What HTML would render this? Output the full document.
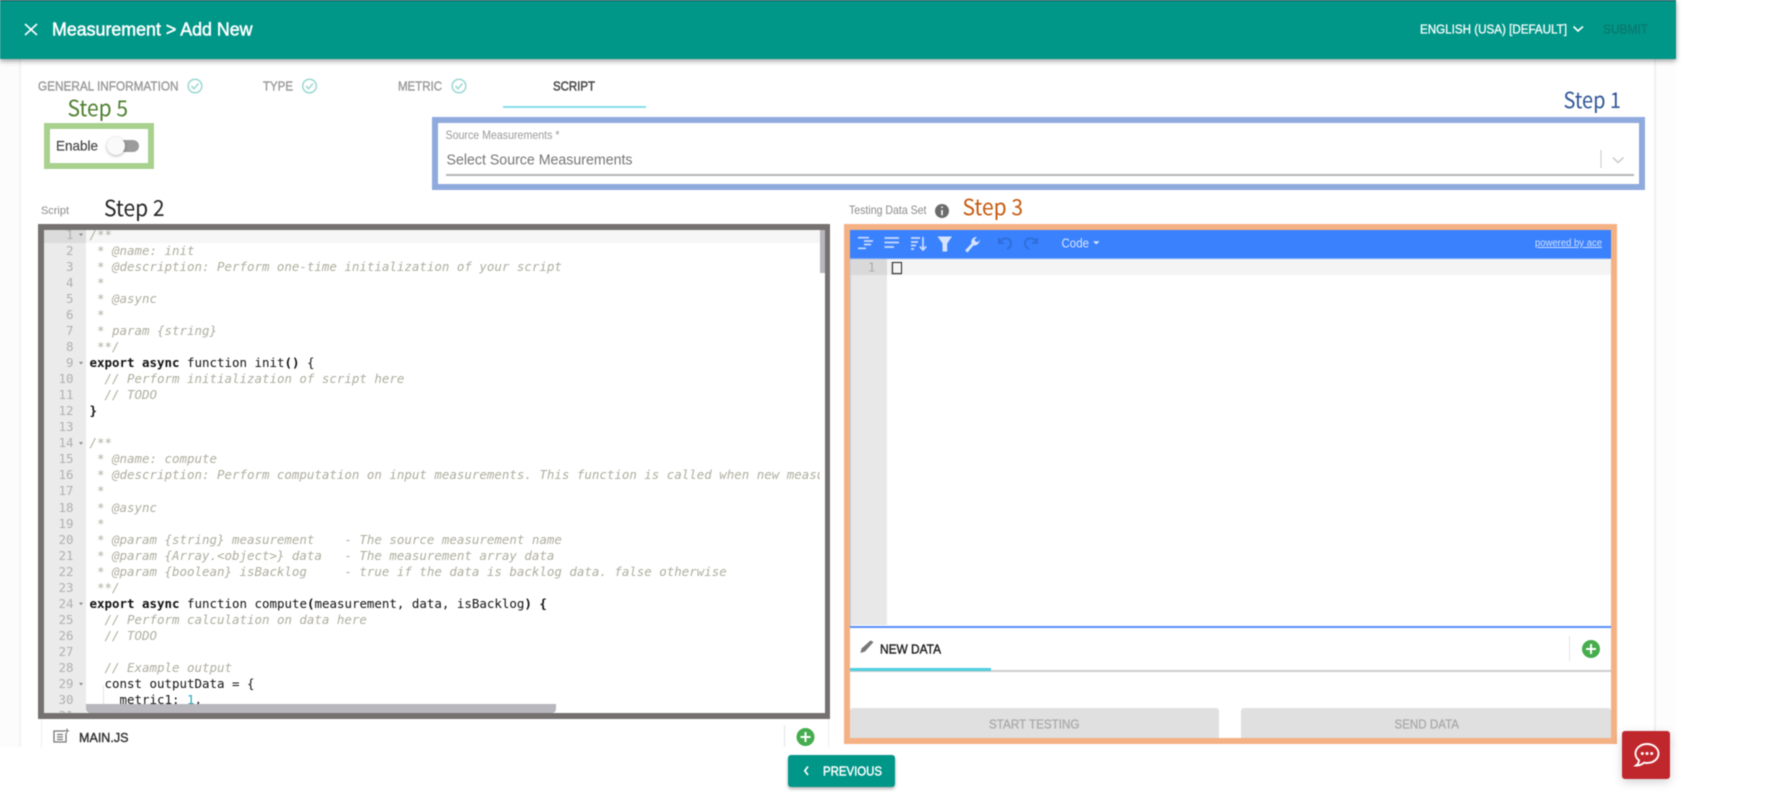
<!DOCTYPE html>
<html lang="en"><head><meta charset="utf-8"><title>Measurement &gt; Add New</title>
<style>
html,body{margin:0;padding:0;background:#fff;width:1777px;height:793px;overflow:hidden}
body{position:relative;font-family:"Liberation Sans",sans-serif}
.a{position:absolute;box-sizing:border-box}
pre{margin:0;font-family:"DejaVu Sans Mono","Liberation Mono",monospace;font-size:12.46px;line-height:16.05px;position:absolute}
.c{color:#aeae9f;font-style:italic}
b{font-weight:700}
svg{position:absolute;left:0;top:0}
svg text{font-family:"Liberation Sans",sans-serif}
.s{font-family:"Noto Sans CJK JP","Liberation Sans",sans-serif!important;font-size:22px}
#soft{position:absolute;left:0;top:0;width:1777px;height:793px;filter:blur(.45px)}
</style></head><body>
<div id="soft">
<div class="a" style="left:0;top:0;width:19px;height:747px;background:#fcfcfc"></div>
<div class="a" style="left:1656px;top:58px;width:20px;height:689px;background:#fdfdfd"></div>
<div class="a" style="left:19px;top:58px;width:1637px;height:689px;background:#fff;border-left:2px solid #f3f3f3;border-right:2px solid #f1f1f1"></div>
<div class="a" style="left:0;top:0;width:1676px;height:59px;background:#009688;border-top:1px solid #1d4a50;box-shadow:0 2px 5px rgba(0,0,0,.38)"></div>
<div class="a" style="left:503px;top:106px;width:143px;height:2px;background:#84dfe9"></div>

<div class="a" style="left:44px;top:123px;width:110px;height:46px;border:6px solid #a9d18e"></div>
<div class="a" style="left:432px;top:117px;width:1213px;height:73px;border:6px solid #8faadc"></div>
<div class="a" style="left:445.5px;top:174px;width:1188px;height:2px;background:#b5b5b5"></div>
<div class="a" style="left:115px;top:140px;width:24px;height:12px;border-radius:6px;background:#9c9c9c"></div>
<div class="a" style="left:106.5px;top:137px;width:18px;height:18px;border-radius:50%;background:#fafafa;box-shadow:0 1px 3px rgba(0,0,0,.3)"></div>

<div class="a" style="left:38px;top:224px;width:792px;height:495px;background:#fff;overflow:hidden;border:6px solid #767171;border-right-width:5px">
  <div class="a" style="left:0;top:0;width:41.5px;height:483px;background:#ebebeb"></div>
  <div class="a" style="left:0;top:0;width:41.5px;height:13px;background:#dcdcdc"></div>
  <div class="a" style="left:41.5px;top:0;width:742px;height:13px;background:#f6f6f6"></div>
  <pre style="left:0;top:-3.3px;width:29.5px;text-align:right;color:#b0b0b0">1
2
3
4
5
6
7
8
9
10
11
12
13
14
15
16
17
18
19
20
21
22
23
24
25
26
27
28
29
30
31</pre>
  <div class="a" style="left:45px;top:0;width:731px;height:483px;overflow:hidden">
  <pre style="left:0.5px;top:-3.3px;color:#111"><span class="c">/**
 * @name: init
 * @description: Perform one-time initialization of your script
 *
 * @async
 *
 * param {string}
 **/</span>
<b>export async</b> function init<b>()</b> {
  <span class="c">// Perform initialization of script here</span>
  <span class="c">// TODO</span>
<b>}</b>

<span class="c">/**
 * @name: compute
 * @description: Perform computation on input measurements. This function is called when new measurement data arrives
 *
 * @async
 *
 * @param {string} measurement    - The source measurement name
 * @param {Array.&lt;object&gt;} data   - The measurement array data
 * @param {boolean} isBacklog     - true if the data is backlog data. false otherwise
 **/</span>
<b>export async</b> function compute<b>(</b>measurement, data, isBacklog<b>) {</b>
  <span class="c">// Perform calculation on data here</span>
  <span class="c">// TODO</span>

  <span class="c">// Example output</span>
  const outputData = {
    metric1: <span style="color:#2aa7b5">1</span>,
</pre></div>
  <div class="a" style="left:59px;top:455px;width:1px;height:28px;background:#e4e4e4"></div>
  <div class="a" style="left:776px;top:0;width:6px;height:43px;background:#b6b6bc"></div>
  <div class="a" style="left:41.5px;top:474px;width:470.5px;height:9px;background:#b7b7bd;border-radius:0 0 4px 4px"></div>
</div>

<div class="a" style="left:41px;top:719px;width:1px;height:28px;background:#eee"></div>
<div class="a" style="left:828px;top:719px;width:1px;height:28px;background:#eee"></div>
<div class="a" style="left:784px;top:725px;width:1px;height:22px;background:#e2e2e2"></div>

<div class="a" style="left:844px;top:224px;width:773px;height:520px;border:6px solid #f4b183;background:#fff;overflow:hidden">
  <div class="a" style="left:0;top:0;width:761px;height:29px;background:#3a81fd;border-bottom:1px solid #6aa0fb"></div>
  <div class="a" style="left:0;top:29px;width:36.5px;height:366px;background:#e8e8e8"></div>
  <div class="a" style="left:0;top:29px;width:36.5px;height:16px;background:#d9d9d9"></div>
  <div class="a" style="left:36.5px;top:29px;width:725px;height:16px;background:#f4f4f4"></div>
  <div class="a" style="left:0;top:29px;width:1px;height:367px;background:#bcd3fb"></div>
  <div class="a" style="left:0;top:396px;width:761px;height:2px;background:#5a8ff8"></div>
  <div class="a" style="left:0;top:440px;width:761px;height:2px;background:#cdcdcd"></div>
  <div class="a" style="left:0;top:438px;width:141px;height:3px;background:#4fcfe0"></div>
  <div class="a" style="left:719px;top:406px;width:1px;height:25px;background:#e4e4e4"></div>
  <div class="a" style="left:0;top:478px;width:369px;height:40px;background:#e0e0e0;border-radius:3px 3px 0 0"></div>
  <div class="a" style="left:391px;top:478px;width:370px;height:40px;background:#e0e0e0;border-radius:3px 3px 0 0"></div>
  <div class="a" style="left:41px;top:31.5px;width:11px;height:13.5px;border:1px solid #cfcfcf;border-right:0"></div>
  <div class="a" style="left:42.3px;top:31.5px;width:10px;height:12px;border:1.7px solid #222"></div>
</div>

<div class="a" style="left:787.5px;top:755px;width:107.5px;height:32px;background:#009688;border-radius:3px;box-shadow:0 2px 3px rgba(0,0,0,.3)"></div>
<div class="a" style="left:1622px;top:731px;width:48px;height:48px;background:#c0272d;border-radius:3px;box-shadow:0 3px 10px rgba(0,0,0,.18)"></div>

<svg width="1777" height="793" viewBox="0 0 1777 793" xmlns="http://www.w3.org/2000/svg">
<!-- header -->
<path d="M25 24 L37 35 M37 24 L25 35" stroke="#fff" stroke-width="1.6" fill="none"/>
<text x="52" y="35.5" font-size="18" fill="#fff" stroke="#fff" stroke-width=".5" textLength="200.5" lengthAdjust="spacingAndGlyphs">Measurement &gt; Add New</text>
<text x="1420" y="33.5" font-size="13" fill="#f2fbfa" stroke="#f2fbfa" stroke-width=".35" textLength="147" lengthAdjust="spacingAndGlyphs">ENGLISH (USA) [DEFAULT]</text>
<path d="M1573.5 26.5 L1578 31 L1583 26.5" stroke="#fff" stroke-width="1.7" fill="none"/>
<text x="1603" y="33.5" font-size="13" fill="#0a7a6e" stroke="#0a7a6e" stroke-width=".3" textLength="45" lengthAdjust="spacingAndGlyphs">SUBMIT</text>
<!-- tabs -->
<g fill="#9b9b9b" font-size="13" stroke="#9b9b9b" stroke-width=".4">
<text x="38" y="90.5" textLength="140.5" lengthAdjust="spacingAndGlyphs">GENERAL INFORMATION</text>
<text x="263" y="90.5" textLength="30" lengthAdjust="spacingAndGlyphs">TYPE</text>
<text x="398" y="90.5" textLength="44" lengthAdjust="spacingAndGlyphs">METRIC</text>
</g>
<text x="553" y="90.5" font-size="13" fill="#444" stroke="#444" stroke-width=".45" textLength="42" lengthAdjust="spacingAndGlyphs">SCRIPT</text>
<g fill="none" stroke="#9bd8d1" stroke-width="1.5">
<circle cx="195" cy="86" r="6.8"/><path d="M191.5 86 L194 88.7 L198.5 83.5"/>
<circle cx="309.5" cy="86" r="6.8"/><path d="M306 86 L308.5 88.7 L313 83.5"/>
<circle cx="459" cy="86" r="6.8"/><path d="M455.5 86 L458 88.7 L462.5 83.5"/>
</g>
<!-- steps -->
<text class="s" x="67.5" y="116" fill="#4e7f2e" textLength="60.5" lengthAdjust="spacingAndGlyphs">Step 5</text>
<text class="s" x="1563.5" y="108" fill="#2f5597" textLength="57.5" lengthAdjust="spacingAndGlyphs">Step 1</text>
<text class="s" x="104" y="216" fill="#262626" textLength="60.5" lengthAdjust="spacingAndGlyphs">Step 2</text>
<text class="s" x="962.5" y="215" fill="#c55a11" textLength="60.5" lengthAdjust="spacingAndGlyphs">Step 3</text>
<!-- labels -->
<text x="56" y="150.5" font-size="14" fill="#444" stroke="#444" stroke-width=".15" textLength="42" lengthAdjust="spacingAndGlyphs">Enable</text>
<text x="445.5" y="139" font-size="11.5" fill="#999" textLength="114" lengthAdjust="spacingAndGlyphs">Source Measurements *</text>
<text x="446.5" y="164.5" font-size="15" fill="#767676" textLength="186" lengthAdjust="spacingAndGlyphs">Select Source Measurements</text>
<path d="M1601 150 V168" stroke="#c8c8c8" stroke-width="1"/>
<path d="M1613 157.5 L1618 162.5 L1623.5 157.5" stroke="#cfcfcf" stroke-width="1.7" fill="none"/>
<text x="41" y="214" font-size="11" fill="#8a8a8a" textLength="28" lengthAdjust="spacingAndGlyphs">Script</text>
<text x="849" y="214" font-size="12" fill="#8a8a8a" textLength="77.5" lengthAdjust="spacingAndGlyphs">Testing Data Set</text>
<circle cx="942" cy="211" r="7" fill="#6b6b6b"/>
<path d="M942 210 V215.2 M942 206.5 V208" stroke="#fff" stroke-width="1.6"/>
<!-- fold arrows -->
<g fill="#888">
<path d="M79 233.5 h4 l-2 2.6z"/><path d="M79 361.9 h4 l-2 2.6z"/><path d="M79 442.1 h4 l-2 2.6z"/><path d="M79 602.6 h4 l-2 2.6z"/><path d="M79 682.9 h4 l-2 2.6z"/>
</g>
<!-- MAIN.JS -->
<g fill="none" stroke="#777" stroke-width="1.3">
<path d="M65 731 H54 V742 H66 V733"/><path d="M57 734.5 H63 M57 737 H63 M57 739.5 H63"/>
<path d="M67 728.5 V733 M64.8 730.8 H69.2" stroke-width="1"/>
</g>
<text x="79" y="742" font-size="13" fill="#333" stroke="#333" stroke-width=".4" textLength="49.5" lengthAdjust="spacingAndGlyphs">MAIN.JS</text>
<circle cx="805.5" cy="737" r="9" fill="#46ad4e"/><path d="M805.5 732 V742 M800.5 737 H810.5" stroke="#fff" stroke-width="2"/>
<!-- toolbar -->
<g stroke="#c9dcff" stroke-width="1.7" fill="none">
<path d="M858 237.7 H869 M864 241 H873 M864 244.5 H871 M858 248.3 H866"/>
<path d="M884.5 238 H899 M884.5 242.5 H899 M884.5 247 H894"/>
<path d="M911 238 H920 M911 242 H918 M911 245.5 H916 M911 249 H914 M923 237 V250 M919.8 246.5 L923 250 L926.2 246.5"/>
</g>
<path d="M937.5 236.5 H952 L947.2 243.5 V251.5 H942.5 V243.5Z" fill="#d5e3ff"/>
<path d="M965 250.5 L971.5 243.5 C970.6 240 973 237 977 236.8 L974.5 239.8 L975.7 241.8 L978.4 242 L979.7 239.4 C980 243.5 976.6 246 973.6 245.4 L967.5 252.5 Z" fill="#d5e3ff"/>
<g stroke="#2f6fdc" stroke-width="2" fill="none">
<path d="M999 238 V243 H1004 M999.5 242.5 C1002 237.5 1008 237 1010.5 241 C1012 244 1010.5 247.5 1007 249"/>
<path d="M1037 238 V243 H1032 M1036.5 242.5 C1034 237.5 1028 237 1025.5 241 C1024 244 1025.5 247.5 1029 249"/>
</g>
<text x="1061.5" y="247.3" font-size="12.5" fill="#d5e3ff" textLength="27.5" lengthAdjust="spacingAndGlyphs">Code</text>
<path d="M1093 241.3 h6.5 l-3.25 3.2z" fill="#d5e3ff"/>
<text x="1535" y="246" font-size="10" fill="#cfe0ff" text-decoration="underline" textLength="67" lengthAdjust="spacingAndGlyphs">powered by ace</text>
<text x="868" y="271.5" font-size="12" fill="#aaa" style="font-family:'DejaVu Sans Mono',monospace">1</text>
<!-- new data -->
<path d="M860.5 653 L861.5 648.5 L870.5 640.5 L873.5 642 L865 651.5 Z" fill="#777"/>
<text x="880" y="653.5" font-size="13" fill="#222" stroke="#222" stroke-width=".4" textLength="61" lengthAdjust="spacingAndGlyphs">NEW DATA</text>
<circle cx="1591" cy="649" r="9" fill="#46ad4e"/><path d="M1591 644 V654 M1586 649 H1596" stroke="#fff" stroke-width="2"/>
<text x="989" y="728.5" font-size="13" fill="#ababab" stroke="#ababab" stroke-width=".35" textLength="90.5" lengthAdjust="spacingAndGlyphs">START TESTING</text>
<text x="1394.5" y="728.5" font-size="13" fill="#ababab" stroke="#ababab" stroke-width=".35" textLength="64.5" lengthAdjust="spacingAndGlyphs">SEND DATA</text>
<!-- previous -->
<path d="M808 766.5 L804.8 770.7 L808 775" stroke="#fff" stroke-width="1.7" fill="none"/>
<text x="823" y="775.3" font-size="13" fill="#fff" stroke="#fff" stroke-width=".45" textLength="59" lengthAdjust="spacingAndGlyphs">PREVIOUS</text>
<!-- chat -->
<path d="M1647 744 C1640.5 744 1635.5 748.3 1635.5 753.5 C1635.5 756.3 1636.9 758.7 1639 760.3 C1638.9 762.4 1637.8 764.3 1636 765.5 C1639.2 765.7 1642 764.5 1644 762.7 C1645 762.9 1646 763 1647 763 C1653.5 763 1658.5 758.8 1658.5 753.5 C1658.5 748.3 1653.5 744 1647 744 Z" fill="none" stroke="#fff" stroke-width="1.9"/>
<circle cx="1642.3" cy="753.5" r="1.5" fill="#fff"/><circle cx="1647" cy="753.5" r="1.5" fill="#fff"/><circle cx="1651.7" cy="753.5" r="1.5" fill="#fff"/>
</svg>
</div>
</body></html>
